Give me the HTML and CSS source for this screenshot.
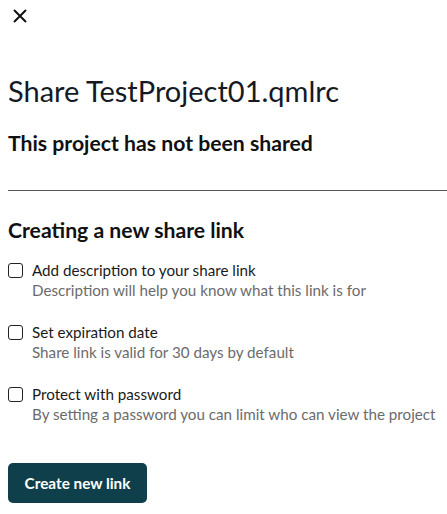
FILE: index.html
```html
<!DOCTYPE html>
<html>
<head>
<meta charset="utf-8">
<link rel="stylesheet" href="styles.css">
</head>
<body>
<div class="dialog">
  <button class="close" aria-label="Close">
    <svg width="14" height="14" viewBox="0 0 14 14"><path d="M1 1L13 13M13 1L1 13" stroke="#111" stroke-width="2" fill="none"/></svg>
  </button>
  <h1 class="title">Share TestProject01.qmlrc</h1>
  <h2 class="status">This project has not been shared</h2>
  <hr class="divider">
  <h3 class="section">Creating a new share link</h3>
  <div class="options">
    <label class="option">
      <span class="box"></span>
      <span class="text">
        <span class="label">Add description to your share link</span>
        <span class="desc">Description will help you know what this link is for</span>
      </span>
    </label>
    <label class="option">
      <span class="box"></span>
      <span class="text">
        <span class="label">Set expiration date</span>
        <span class="desc">Share link is valid for 30 days by default</span>
      </span>
    </label>
    <label class="option">
      <span class="box"></span>
      <span class="text">
        <span class="label">Protect with password</span>
        <span class="desc">By setting a password you can limit who can view the project</span>
      </span>
    </label>
  </div>
  <button class="create">Create new link</button>
</div>
</body>
</html>
```
FILE: styles.css
```css
* { box-sizing: border-box; }
body {
  margin: 0;
  background: #fff;
  font-family: "Lato", "Open Sans", sans-serif;
  color: #161a1f;
}
.dialog {
  padding: 9px 0 0 8px;
  display: flex;
  flex-direction: column;
  align-items: flex-start;
}
.close {
  border: 0;
  background: none;
  padding: 0;
  margin: 0 0 0 5px;
  width: 14px;
  height: 14px;
  display: block;
}
.close svg { display: block; }
.title {
  margin: 50px 0 0 0;
  font-size: 29px;
  font-weight: 400;
  line-height: 36px;
  color: #141a24;
}
.status {
  margin: 21px 0 0 0;
  font-size: 21.2px;
  font-weight: 700;
  line-height: 26px;
  color: #111;
}
.divider {
  align-self: stretch;
  margin: 34px 0 0 0;
  border: 0;
  border-top: 1px solid #555;
  height: 0;
}
.section {
  margin: 26px 0 0 0;
  font-size: 21.2px;
  font-weight: 700;
  line-height: 26px;
  color: #111;
}
.options {
  margin-top: 17px;
  display: flex;
  flex-direction: column;
  gap: 22px;
}
.option {
  display: flex;
  gap: 9px;
  align-items: flex-start;
}
.box {
  width: 15px;
  height: 15px;
  border: 1.5px solid #222;
  border-radius: 3px;
  margin-top: 3px;
  flex: none;
}
.text { display: flex; flex-direction: column; }
.label { font-size: 15.2px; line-height: 20px; color: #1a1a1a; }
.desc { font-size: 15.2px; line-height: 20px; color: #6b6b6b; }
.create {
  margin-top: 39px;
  width: 139px;
  height: 40px;
  border: 0;
  border-radius: 5px;
  background: #0f3f4a;
  color: #fff;
  font-family: inherit;
  font-size: 15.3px;
  font-weight: 700;
}
```
